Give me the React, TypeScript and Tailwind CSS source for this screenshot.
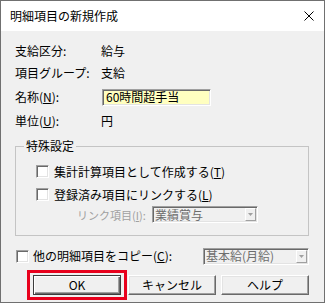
import React from 'react';

const FONT = { fontFamily: '"Noto Sans CJK JP", "Noto Sans", sans-serif' };

function CheckBox() {
  return (
    <span className="block w-[13px] h-[13px] shrink-0 bg-white border border-t-[#a0a0a0] border-l-[#a0a0a0] border-r-white border-b-white shadow-[inset_1px_1px_0_#696969,inset_-1px_-1px_0_#e3e3e3]" />
  );
}

function Combo({ value, width }: { value: string; width: string }) {
  return (
    <div
      className={`${width} h-[17px] shrink-0 flex items-center bg-[#f0f0f0] border border-t-[#a0a0a0] border-l-[#a0a0a0] border-r-white border-b-white shadow-[inset_1px_1px_0_#696969,inset_-1px_-1px_0_#e3e3e3]`}
    >
      <span className="flex-1 pl-[2px] text-[#6d6d6d] text-[12px] leading-[14px] whitespace-nowrap">{value}</span>
      <span className="w-[11px] h-[13px] mr-[1px] flex items-center justify-center bg-[#f0f0f0] border border-t-white border-l-white border-r-[#a0a0a0] border-b-[#a0a0a0]">
        <svg width="5" height="3" viewBox="0 0 5 3">
          <path d="M0 0h5L2.5 3z" fill="#a0a0a0" />
        </svg>
      </span>
    </div>
  );
}

function Button({ label, isDefault = false }: { label: string; isDefault?: boolean }) {
  return (
    <button
      className={`w-[88px] h-[20px] bg-[#f0f0f0] text-[12px] leading-[14px] text-black flex items-center justify-center ${
        isDefault
          ? 'border border-[#3c3c3c] shadow-[inset_1px_1px_0_#fff,inset_-1px_-1px_0_#696969,inset_-2px_-2px_0_#a0a0a0]'
          : 'border border-t-white border-l-white border-r-[#696969] border-b-[#696969] shadow-[inset_-1px_-1px_0_#a0a0a0,inset_1px_1px_0_#e3e3e3]'
      }`}
    >
      {label}
    </button>
  );
}

export default function App() {
  return (
    <div
      style={FONT}
      className="w-[325px] h-[303px] flex flex-col border border-[#707070] bg-[#f0f0f0] text-black text-[12px] leading-[14px] overflow-hidden"
    >
      {/* Title bar */}
      <div className="h-[30px] shrink-0 bg-white flex items-center justify-between pl-[9px] pr-[10px]">
        <span className="text-[12px]">明細項目の新規作成</span>
        <svg width="10" height="10" viewBox="0 0 10 10" className="mt-[-1px]">
          <path d="M0.5 0.5L9.5 9.5M9.5 0.5L0.5 9.5" stroke="#000" strokeWidth="1" />
        </svg>
      </div>

      {/* Body */}
      <div className="flex-1 flex flex-col pl-[14px] pr-[15px] pt-[9px]">
        <div className="flex items-center h-[22px]">
          <span className="w-[86px]">支給区分:</span>
          <span>給与</span>
        </div>
        <div className="flex items-center h-[22px]">
          <span className="w-[86px]">項目グループ:</span>
          <span>支給</span>
        </div>
        <div className="flex items-center h-[26px]">
          <span className="w-[87px]">
            名称(<u>N</u>):
          </span>
          <div className="w-[109px] h-[17px] flex items-center bg-[#ffffc0] border border-t-[#a0a0a0] border-l-[#a0a0a0] border-r-white border-b-white shadow-[inset_1px_1px_0_#696969,inset_-1px_-1px_0_#e3e3e3] pl-[3px]">
            60時間超手当
          </div>
        </div>
        <div className="flex items-center h-[22px]">
          <span className="w-[86px]">
            単位(<u>U</u>):
          </span>
          <span>円</span>
        </div>

        {/* 特殊設定 group */}
        <fieldset className="mt-[7px] border border-[#c4c4c4] pl-[20px] pr-0 pt-[7px] pb-[12px]">
          <legend className="ml-[-12px] px-[2px] leading-[14px]">特殊設定</legend>
          <div className="flex items-center h-[23px] gap-[5px]">
            <CheckBox />
            <span>
              集計計算項目として作成する(<u>T</u>)
            </span>
          </div>
          <div className="flex items-center h-[23px] gap-[5px]">
            <CheckBox />
            <span>
              登録済み項目にリンクする(<u>L</u>)
            </span>
          </div>
          <div className="flex items-center h-[17px]">
            <span className="w-[116px] shrink-0 pl-[41px] text-[11px] text-[#a0a0a0] whitespace-nowrap">
              リンク項目(<u>I</u>):
            </span>
            <Combo value="業績賞与" width="w-[106px]" />
          </div>
        </fieldset>

        {/* Copy row */}
        <div className="flex items-center h-[18px] mt-[11px]">
          <span className="ml-[1px] mr-[4px]">
            <CheckBox />
          </span>
          <span className="flex-1">
            他の明細項目をコピー(<u>C</u>):
          </span>
          <Combo value="基本給(月給)" width="w-[106px]" />
        </div>

        {/* Buttons */}
        <div className="flex items-center mt-[5px]">
          <div className="ml-[12px] border-[3px] border-[#e8001c] px-[3px] py-[2px]">
            <Button label="OK" isDefault />
          </div>
          <div className="ml-[1px]">
            <Button label="キャンセル" />
          </div>
          <div className="ml-[5px]">
            <Button label="ヘルプ" />
          </div>
        </div>
      </div>
    </div>
  );
}
